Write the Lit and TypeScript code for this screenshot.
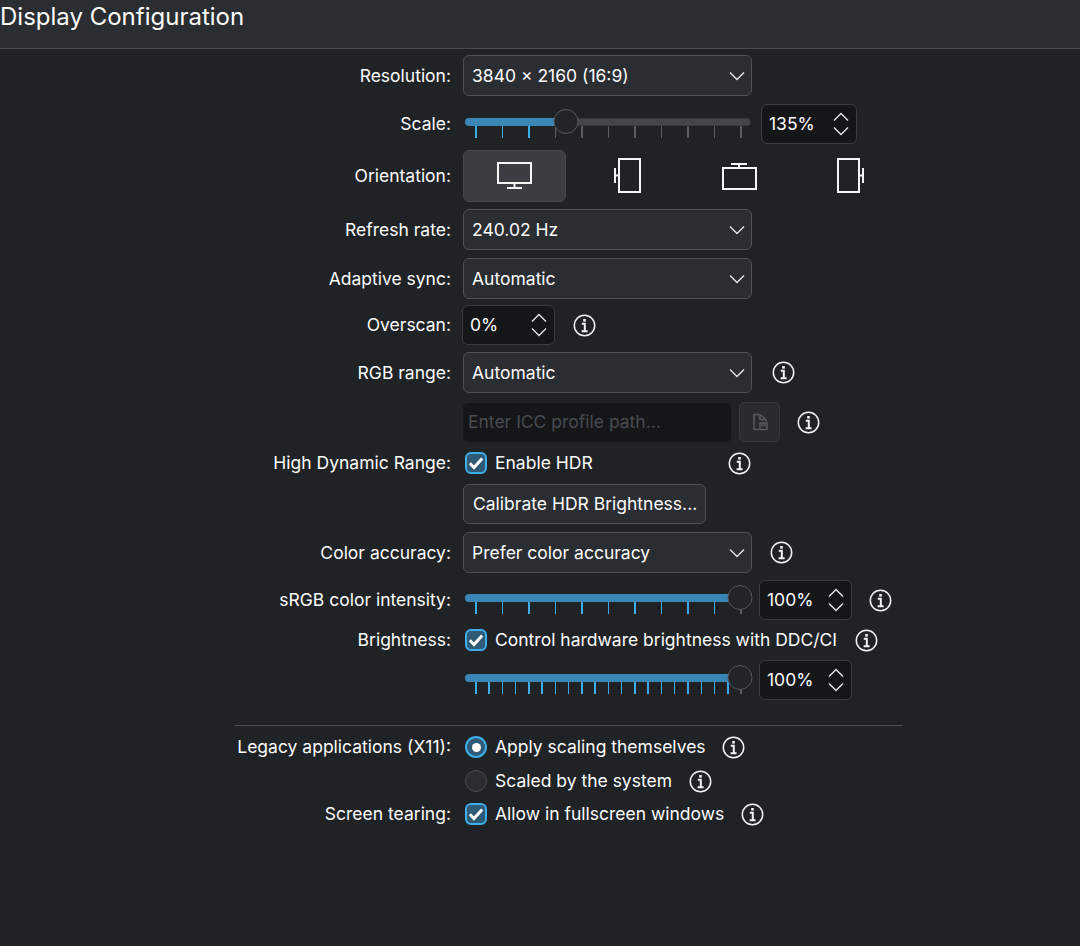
import { LitElement, html, css, svg } from "lit";
import { customElement } from "lit/decorators.js";

const chevDown = html`<svg class="chev" width="16" height="10" viewBox="0 0 16 10"><path d="M1 1.5 8 8.5l7-7" fill="none" stroke="#e4e5e6" stroke-width="1.4"/></svg>`;
const chevUp = html`<svg class="chev" width="16" height="10" viewBox="0 0 16 10"><path d="M1 8.5 8 1.5l7 7" fill="none" stroke="#e4e5e6" stroke-width="1.4"/></svg>`;
const check = html`<svg width="16" height="14" viewBox="0 0 16 14"><path d="M1.8 7.2 6 11.5 14.2 2.6" fill="none" stroke="#fcfcfc" stroke-width="3"/></svg>`;

const info = (ml: number) => html`<svg class="info" style="margin-left:${ml}px" width="23" height="23" viewBox="0 0 23 23">
  <circle cx="11.5" cy="11.5" r="10.2" fill="none" stroke="#f2f3f3" stroke-width="1.5"/>
  <rect x="10.2" y="5" width="2.6" height="2.6" fill="#f2f3f3"/>
  <path d="M8.8 9.8h3v7.4M8.6 17.2h6" fill="none" stroke="#f2f3f3" stroke-width="2"/>
</svg>`;

const orientIcons = [
  svg`<path d="M1 5h33v20H1z M17.5 25v5 M10 30h15" fill="none" stroke="#f4f5f5" stroke-width="2"/>`,
  svg`<path d="M10 1h21v33H10z M10 17.5H6 M6 10v15" fill="none" stroke="#f4f5f5" stroke-width="2"/>`,
  svg`<path d="M2 10h33v21H2z M18 10V6 M10 6h16" fill="none" stroke="#f4f5f5" stroke-width="2"/>`,
  svg`<path d="M5 1h21v33H5z M26 17.5h4 M30 10v15" fill="none" stroke="#f4f5f5" stroke-width="2"/>`,
];

@customElement("app-root")
export class AppRoot extends LitElement {
  static styles = css`
    :host { display: block; width: 1080px; height: 946px; overflow: hidden; background: #202326; color: #fcfcfc; font-family: Inter, "Noto Sans", sans-serif; font-size: 17.5px; }
    .header { height: 48px; background: #2a2e32; border-bottom: 1px solid #4a4d51; display: flex; align-items: flex-start; font-size: 24px; line-height: 34px; }
    .form { display: flex; flex-direction: column; padding-top: 6px; }
    .row { display: grid; grid-template-columns: 451px 1fr; column-gap: 12px; align-items: center; }
    .label { text-align: right; white-space: nowrap; }
    .h40 .label, .h26 .label, .h52 .label, .h26 span, .spin span, .icc, .btn { padding-bottom: 1px; }
    .field { display: flex; align-items: center; height: 100%; white-space: nowrap; }
    .g6 { margin-top: 6px; } .g7 { margin-top: 7px; } .g8 { margin-top: 8px; } .g9 { margin-top: 9px; } .g10 { margin-top: 10px; }
    .combo { box-sizing: border-box; width: 289px; height: 41px; background: #2a2d32; border: 1px solid #4e5155; border-radius: 6px; display: flex; align-items: center; justify-content: space-between; padding: 0 6px 0 8px; }
    .btn { box-sizing: border-box; height: 40px; padding-left: 9px; padding-right: 8px; background: #2a2d32; border: 1px solid #4e5155; border-radius: 6px; display: flex; align-items: center; }
    .spin { box-sizing: border-box; height: 40px; background: #141618; border: 1px solid #393c40; border-radius: 6px; display: flex; align-items: center; justify-content: space-between; padding: 0 7px 0 7px; }
    .spin.w96 { width: 96px; margin-left: 10px; } .spin.w93 { width: 93px; margin-left: -1px; } .spin.w93r { width: 93px; margin-left: 8px; }
    .arrows { display: flex; flex-direction: column; gap: 4px; }
    .chev { display: block; }
    .icc { box-sizing: border-box; width: 268px; height: 39px; background: #141618; border-radius: 5px; color: #494c50; display: flex; align-items: center; padding-left: 5px; }
    .fbtn { box-sizing: border-box; width: 41px; height: 40px; margin-left: 8px; background: #282b2f; border: 1px solid #35383c; border-radius: 5px; display: flex; align-items: center; justify-content: center; }
    .info { flex: none; display: block; }
    .box { box-sizing: border-box; flex: none; width: 22px; height: 22px; margin-left: 2px; margin-right: 8px; background: #2e5a75; border: 2px solid #3daee9; border-radius: 6px; display: flex; align-items: center; justify-content: center; }
    .radio { border-radius: 50%; }
    .radio.off { background: #2a2d32; border: 1.5px solid #4a4d51; }
    .dot { width: 9px; height: 9px; border-radius: 50%; background: #fcfcfc; }
    .slider { position: relative; flex: none; width: 286px; height: 40px; margin-left: 2px; }
    .track { position: absolute; left: 0; right: 0; top: 14px; height: 8px; border-radius: 4px; background: #43464a; border: 1px solid #35383c; box-sizing: border-box; }
    .fill { position: absolute; left: 0; top: 14px; height: 8px; border-radius: 4px 0 0 4px; background: #3a87b5; }
    .handle { position: absolute; top: 5px; box-sizing: border-box; width: 25px; height: 25px; border-radius: 50%; background: #212428; border: 1.5px solid #54575b; transform: translateX(-12.5px); }
    .ticks { position: absolute; left: 10px; top: 22px; width: 267px; height: 12px; display: flex; justify-content: space-between; }
    .tick { width: 1.5px; height: 12px; background: #5a5d61; }
    .tick.on { background: #3daee9; }
    .orient { display: flex; gap: 9px; }
    .obtn { box-sizing: border-box; width: 103px; height: 52px; border-radius: 6px; display: flex; align-items: center; justify-content: center; border: 1px solid transparent; }
    .obtn.sel { background: #3a3d41; border-color: #44474b; }
    .sep { height: 1px; background: #4a4d51; margin: 25px 177px 0 235px; }
    .h26 { height: 26px; } .h40 { height: 40px; } .h41 { height: 41px; } .h52 { height: 52px; } .h39 { height: 39px; }
  `;

  private slider(val: number, n: number, w: number) {
    const ticks = Array.from({ length: n }, (_, i) => i);
    return html`<div class="slider">
      <div class="track"></div>
      <div class="fill" style="width:${val}px"></div>
      <div class="ticks">${ticks.map((i) => html`<div class="tick ${10 + (i * 267) / (n - 1) <= val + 1 ? "on" : ""}"></div>`)}</div>
      <div class="handle" style="left:${val + w}px"></div>
    </div>`;
  }

  private spin(text: string, cls: string) {
    return html`<div class="spin ${cls}"><span>${text}</span><div class="arrows">${chevUp}${chevDown}</div></div>`;
  }

  private combo(text: string) {
    return html`<div class="combo"><span>${text}</span>${chevDown}</div>`;
  }

  private row(label: string, cls: string, field: unknown) {
    return html`<div class="row ${cls}"><div class="label">${label}</div><div class="field">${field}</div></div>`;
  }

  render() {
    return html`
      <div class="header">Display Configuration</div>
      <div class="form">
        ${this.row("Resolution:", "h41", this.combo("3840 × 2160 (16:9)"))}
        ${this.row("Scale:", "h40 g8", html`${this.slider(89, 11, 12)}${this.spin("135%", "w96")}`)}
        ${this.row("Orientation:", "h52 g6", html`<div class="orient">${orientIcons.map((p, i) => html`<div class="obtn ${i === 0 ? "sel" : ""}"><svg width="36" height="36" viewBox="0 0 36 36">${p}</svg></div>`)}</div>`)}
        ${this.row("Refresh rate:", "h41 g7", this.combo("240.02 Hz"))}
        ${this.row("Adaptive sync:", "h41 g8", this.combo("Automatic"))}
        ${this.row("Overscan:", "h40 g6", html`${this.spin("0%", "w93")}${info(18)}`)}
        ${this.row("RGB range:", "h41 g7", html`${this.combo("Automatic")}${info(20)}`)}
        ${this.row("", "h39 g9", html`<div class="icc">Enter ICC profile path...</div>
          <div class="fbtn"><svg width="16" height="18" viewBox="0 0 16 18"><path d="M8 1.5H2v15h5M8 1.5v5h6v2M8 1.5l6 5" fill="none" stroke="#54575b" stroke-width="1.6"/><path d="M8 10h7v6.5H8z M10 10v2.5h3V10" fill="none" stroke="#54575b" stroke-width="1.5"/></svg></div>${info(17)}`)}
        ${this.row("High Dynamic Range:", "h26 g9", html`<div class="box">${check}</div><span>Enable HDR</span>${info(135)}`)}
        ${this.row("", "h40 g8", html`<div class="btn">Calibrate HDR Brightness...</div>`)}
        ${this.row("Color accuracy:", "h41 g8", html`${this.combo("Prefer color accuracy")}${info(18)}`)}
        ${this.row("sRGB color intensity:", "h40 g7", html`${this.slider(263, 11, 12)}${this.spin("100%", "w93r")}${info(17)}`)}
        ${this.row("Brightness:", "h26 g7", html`<div class="box">${check}</div><span>Control hardware brightness with DDC/CI</span>${info(18)}`)}
        ${this.row("", "h40 g7", html`${this.slider(263, 21, 12)}${this.spin("100%", "w93r")}`)}
        <div class="sep"></div>
        ${this.row("Legacy applications (X11):", "h26 g8", html`<div class="box radio"><div class="dot"></div></div><span>Apply scaling themselves</span>${info(16)}`)}
        ${this.row("", "h26 g8", html`<div class="box radio off"></div><span>Scaled by the system</span>${info(17)}`)}
        ${this.row("Screen tearing:", "h26 g7", html`<div class="box">${check}</div><span>Allow in fullscreen windows</span>${info(17)}`)}
      </div>
    `;
  }
}
